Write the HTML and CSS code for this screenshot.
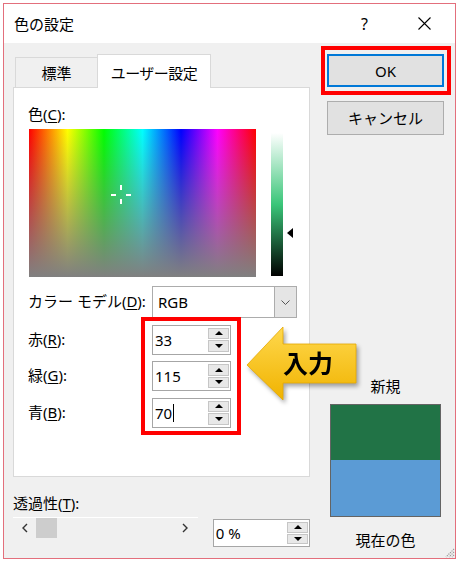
FILE: index.html
```html
<!DOCTYPE html>
<html lang="ja">
<head>
<meta charset="utf-8">
<title>色の設定</title>
<link rel="stylesheet" href="styles.css">
</head>
<body>
<div class="window">
  <div class="titlebar">
    <span class="title">色の設定</span>
    <div class="title-controls">
      <span class="help">?</span>
      <svg class="close" width="13" height="13" viewBox="0 0 13 13"><path d="M0.5 0.5 L12.5 12.5 M12.5 0.5 L0.5 12.5" stroke="#000" stroke-width="1.1" fill="none"/></svg>
    </div>
  </div>
  <div class="content">
    <div class="left">
      <div class="tabs">
        <div class="tab">標準</div>
        <div class="tab active">ユーザー設定</div>
      </div>
      <div class="pane">
        <div class="pane-label">色(<u>C</u>):</div>
        <div class="picker">
          <div class="spectrum">
            <svg class="crosshair" width="20" height="20" viewBox="0 0 20 20">
              <rect x="9" y="0" width="2" height="5" fill="#fff"/>
              <rect x="9" y="14" width="2" height="5" fill="#fff"/>
              <rect x="0" y="9" width="5" height="2" fill="#fff"/>
              <rect x="15" y="9" width="5" height="2" fill="#fff"/>
            </svg>
          </div>
          <div class="lum"><span class="lum-arrow"></span></div>
        </div>
        <div class="form">
          <span class="flabel">カラー モデル(<u>D</u>):</span>
          <div class="select">
            <span class="value">RGB</span>
            <span class="dd"><svg width="9" height="5" viewBox="0 0 9 5"><path d="M0.5 0.5 L4.5 4.5 L8.5 0.5" stroke="#555" fill="none"/></svg></span>
          </div>
          <span class="flabel">赤(<u>R</u>):</span>
          <div class="spin">
            <span class="val">33</span>
            <span class="btns">
              <span class="sbtn"><svg width="8" height="4" viewBox="0 0 8 4"><path d="M0 4 L4 0 L8 4Z" fill="#000"/></svg></span>
              <span class="sbtn"><svg width="8" height="4" viewBox="0 0 8 4"><path d="M0 0 L4 4 L8 0Z" fill="#000"/></svg></span>
            </span>
          </div>
          <span class="flabel">緑(<u>G</u>):</span>
          <div class="spin">
            <span class="val">115</span>
            <span class="btns">
              <span class="sbtn"><svg width="8" height="4" viewBox="0 0 8 4"><path d="M0 4 L4 0 L8 4Z" fill="#000"/></svg></span>
              <span class="sbtn"><svg width="8" height="4" viewBox="0 0 8 4"><path d="M0 0 L4 4 L8 0Z" fill="#000"/></svg></span>
            </span>
          </div>
          <span class="flabel">青(<u>B</u>):</span>
          <div class="spin">
            <span class="val">70<span class="caret"></span></span>
            <span class="btns">
              <span class="sbtn"><svg width="8" height="4" viewBox="0 0 8 4"><path d="M0 4 L4 0 L8 4Z" fill="#000"/></svg></span>
              <span class="sbtn"><svg width="8" height="4" viewBox="0 0 8 4"><path d="M0 0 L4 4 L8 0Z" fill="#000"/></svg></span>
            </span>
          </div>
        </div>
        <div class="hl-inputs"></div>
      </div>
      <div class="trans-label">透過性(<u>T</u>):</div>
      <div class="trans-row">
        <div class="scrollbar">
          <span class="sarrow"><svg width="6" height="10" viewBox="0 0 6 10"><path d="M5 1 L1 5 L5 9" stroke="#333" stroke-width="1.4" fill="none"/></svg></span>
          <span class="thumb"></span>
          <span class="sarrow right"><svg width="6" height="10" viewBox="0 0 6 10"><path d="M1 1 L5 5 L1 9" stroke="#333" stroke-width="1.4" fill="none"/></svg></span>
        </div>
        <div class="spin pct">
          <span class="val">0 %</span>
          <span class="btns">
            <span class="sbtn"><svg width="8" height="4" viewBox="0 0 8 4"><path d="M0 4 L4 0 L8 4Z" fill="#000"/></svg></span>
            <span class="sbtn"><svg width="8" height="4" viewBox="0 0 8 4"><path d="M0 0 L4 4 L8 0Z" fill="#000"/></svg></span>
          </span>
        </div>
      </div>
    </div>
    <div class="right">
      <div class="button ok">OK</div>
      <div class="button cancel">キャンセル</div>
      <div class="new-label">新規</div>
      <div class="preview">
        <div class="pv-new"></div>
        <div class="pv-cur"></div>
      </div>
      <div class="cur-label">現在の色</div>
    </div>
    <div class="hl-ok"></div>
    <div class="callout">
      <svg width="116" height="80" viewBox="0 0 116 80">
        <defs>
          <linearGradient id="yg" x1="0" y1="0" x2="0" y2="1">
            <stop offset="0" stop-color="#ffd84d"/>
            <stop offset="1" stop-color="#f0b300"/>
          </linearGradient>
        </defs>
        <polygon points="2,41 38,3 38,20 111,20 111,59 38,59 38,76" fill="url(#yg)" stroke="#e6a800" stroke-width="0.8"/>
      </svg>
      <span class="callout-text">入力</span>
    </div>
  </div>
  <svg class="grip" width="12" height="12" viewBox="0 0 12 12">
    <path d="M11 3 L3 11 M11 6 L6 11 M11 9 L9 11" stroke="#999" stroke-width="1.2" stroke-dasharray="1.2 1"/>
  </svg>
</div>
</body>
</html>
```
FILE: styles.css
```css
* { box-sizing: border-box; }
html, body { margin: 0; background: #fff; }
body {
  padding: 3px 0 0 3px;
  font-family: "Noto Sans", "Noto Sans CJK JP", sans-serif;
  font-size: 15px;
  color: #000;
}
u { text-underline-offset: 2px; }

.window {
  position: relative;
  width: 453px;
  height: 556px;
  border: 1px solid #e36f7c;
  background: #f0f0f0;
  display: flex;
  flex-direction: column;
}
.titlebar {
  height: 39px;
  background: #fff;
  display: flex;
  align-items: center;
  padding: 0 24px 0 10px;
}
.title { line-height: 20px; }
.title-controls { margin-left: auto; display: flex; align-items: center; }
.help { font-size: 16px; line-height: 20px; margin-right: 50px; }
.close { display: block; }

.content {
  position: relative;
  flex: 1;
  display: grid;
  grid-template-columns: 297px 117px;
  column-gap: 17px;
  align-items: start;
  padding: 11px 0 0 9px;
}

.tabs { display: flex; align-items: flex-end; height: 33px; padding-left: 2px; }
.tab {
  width: 82px;
  height: 30px;
  border: 1px solid #d9d9d9;
  border-right: none;
  border-bottom: none;
  background: #f0f0f0;
  display: flex;
  align-items: center;
  justify-content: center;
  line-height: 20px;
}
.tab.active {
  width: 114px;
  height: 34px;
  margin-bottom: -1px;
  border-right: 1px solid #d9d9d9;
  background: #fff;
  position: relative;
  z-index: 1;
  padding-top: 2px;
  letter-spacing: -0.5px;
}

.pane {
  position: relative;
  height: 390px;
  border: 1px solid #d9d9d9;
  background: #fff;
  padding: 16px 0 0 14px;
}
.pane-label { line-height: 20px; }
.picker { display: flex; align-items: flex-start; margin-top: 5px; }
.spectrum {
  position: relative;
  margin-left: 1px;
  width: 227px;
  height: 148px;
  background:
    linear-gradient(to bottom, rgba(128,128,128,0), #808080),
    linear-gradient(to right, #ff0000, #ffff00 17%, #00ff00 33%, #00ffff 50%, #0000ff 67%, #ff00ff 83%, #ff0000);
}
.crosshair { position: absolute; left: 82px; top: 56px; }
.lum {
  position: relative;
  margin: 4px 0 0 15px;
  width: 12px;
  height: 143px;
  background: linear-gradient(to bottom, #ffffff, hsl(147, 55%, 50%) 50%, #000000);
}
.lum-arrow {
  position: absolute;
  left: 16px;
  top: 95px;
  width: 0;
  height: 0;
  border-right: 6px solid #000;
  border-top: 5px solid transparent;
  border-bottom: 5px solid transparent;
}

.form {
  display: grid;
  grid-template-columns: 124px auto;
  row-gap: 6.5px;
  justify-items: start;
  align-items: center;
  margin-top: 9px;
}
.flabel { line-height: 20px; margin-top: -2px; }
.select {
  width: 145px;
  height: 32px;
  border: 1px solid #acacac;
  background: #fff;
  display: flex;
}
.select .value { flex: 1; padding-left: 5px; line-height: 30px; }
.select .dd {
  width: 22px;
  background: #e5e5e5;
  border-left: 1px solid #acacac;
  display: flex;
  align-items: center;
  justify-content: center;
}

.spin {
  width: 79px;
  height: 30px;
  border: 1px solid #a6a6a6;
  background: #fff;
  display: flex;
}
.spin .val { flex: 1; padding-left: 2px; display: flex; align-items: center; line-height: 20px; }
.caret { display: inline-block; width: 0; height: 18px; border-left: 1px solid #000; margin-left: 1px; }
.spin .btns {
  width: 22px;
  padding: 2px 1px 2px 0;
  display: flex;
  flex-direction: column;
  gap: 1px;
}
.sbtn {
  flex: 1;
  background: #e8e8e8;
  border: 1px solid #c6c6c6;
  display: flex;
  align-items: center;
  justify-content: center;
}
.sbtn svg { display: block; }

.hl-inputs {
  position: absolute;
  left: 127px;
  top: 229px;
  width: 100px;
  height: 118px;
  border: 4px solid #ff0000;
}

.trans-label { margin-top: 16px; line-height: 20px; }
.trans-row { display: flex; align-items: flex-start; margin-top: 4px; }
.scrollbar {
  width: 186px;
  height: 21px;
  border-top: 1px solid #fff;
  display: flex;
  align-items: center;
}
.sarrow { width: 23px; display: flex; justify-content: center; }
.sarrow.right { margin-left: auto; width: 16px; justify-content: flex-start; }
.thumb { width: 21px; height: 20px; background: #cdcdcd; }
.spin.pct { width: 98px; height: 28px; margin: 2px 0 0 15px; }

.button {
  display: flex;
  align-items: center;
  justify-content: center;
  background: #e1e1e1;
  line-height: 20px;
}
.button.ok { height: 33px; border: 2px solid #0078d7; }
.button.cancel { height: 34px; margin-top: 14px; border: 1px solid #adadad; }
.new-label { margin-top: 241px; text-align: center; line-height: 20px; }
.preview {
  margin: 8px 0 0 3px;
  width: 111px;
  height: 113px;
  border: 1px solid #646464;
  display: flex;
  flex-direction: column;
}
.pv-new { flex: 0 0 55px; background: #217346; }
.pv-cur { flex: 1; background: #5b9bd5; }
.cur-label { margin-top: 13px; text-align: center; line-height: 20px; }

.hl-ok {
  position: absolute;
  left: 317px;
  top: 3px;
  width: 130px;
  height: 49px;
  border: 4px solid #ff0000;
}

.callout {
  position: absolute;
  left: 241px;
  top: 281px;
  width: 116px;
  height: 80px;
  filter: drop-shadow(2px 3px 2px rgba(0,0,0,0.35));
}
.callout svg { display: block; }
.callout-text {
  position: absolute;
  left: 38px;
  top: 23px;
  font-size: 25px;
  line-height: 30px;
  font-weight: bold;
  font-family: "Noto Sans CJK JP", sans-serif;
}

.grip { position: absolute; right: 0; bottom: 0; }
```
